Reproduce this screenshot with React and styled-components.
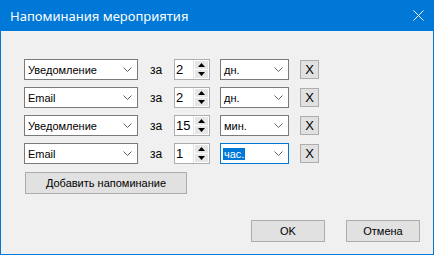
import React from 'react';
import styled, { createGlobalStyle } from 'styled-components';

const GlobalStyle = createGlobalStyle`
  html, body {
    margin: 0;
    padding: 0;
    background: #f0f0f0;
    overflow: hidden;
  }
  * { box-sizing: border-box; }
`

const Window = styled.div`
  width: 434px;
  height: 255px;
  border: 1px solid #0078d7;
  border-top: none;
  background: #f0f0f0;
  display: flex;
  flex-direction: column;
  font-family: "Liberation Sans", Arial, sans-serif;
  font-size: 11px;
  color: #000;
`

const TitleBar = styled.div`
  height: 31px;
  margin: 0 -1px;
  background: #0078d7;
  display: flex;
  align-items: center;
  justify-content: space-between;
  padding: 0 10px 0 10px;
  color: #fff;
  font-family: "Noto Sans", "Open Sans", sans-serif;
  font-size: 13px;
`

const CloseBtn = styled.div`
  width: 12px;
  height: 12px;
  display: flex;
  align-items: center;
  justify-content: center;
`

const Body = styled.div`
  flex: 1;
  display: flex;
  flex-direction: column;
  padding: 28px 13px 12px 23px;
`

const Rows = styled.div`
  display: flex;
  flex-direction: column;
  gap: 7px;
`

const Row = styled.div`
  display: flex;
  align-items: center;
  height: 21px;
`

const Select = styled.div`
  width: ${p => p.$w}px;
  height: 21px;
  margin-left: ${p => p.$ml || 0}px;
  background: #fff;
  border: 1px solid ${p => (p.$focus ? '#0078d7' : '#7a7a7a')};
  display: flex;
  align-items: center;
  justify-content: space-between;
  padding: 0 5px 0 2px;
`

const SelectText = styled.span`
  padding: 0 1px;
  line-height: 12px;
  background: ${p => (p.$hl ? '#0078d7' : 'transparent')};
  color: ${p => (p.$hl ? '#fff' : '#000')};
`

const Label = styled.span`
  margin-left: 12px;
  width: 24px;
  font-size: 12px;
`

const Spinner = styled.div`
  width: 36px;
  height: 21px;
  background: #fff;
  border: 1px solid #abadb3;
  display: flex;
  align-items: stretch;
`

const SpinValue = styled.div`
  flex: 1;
  display: flex;
  align-items: center;
  padding-left: 1px;
  font-size: 13px;
`

const SpinButtons = styled.div`
  width: 16px;
  display: flex;
  flex-direction: column;
  border-left: 1px solid #e3e3e3;
  padding: 1px;
  gap: 1px;
`

const SpinPart = styled.div`
  flex: 1;
  background: #e6e6e6;
  display: flex;
  align-items: center;
  justify-content: center;
`

const XButton = styled.div`
  width: 19px;
  height: 19px;
  margin-left: 11px;
  background: #e1e1e1;
  border: 1px solid #adadad;
  display: flex;
  align-items: center;
  justify-content: center;
  font-size: 13px;
`

const Button = styled.div`
  width: ${p => p.$w}px;
  height: 22px;
  background: #e1e1e1;
  border: 1px solid #adadad;
  display: flex;
  align-items: center;
  justify-content: center;
`

const AddButton = styled(Button)`
  margin: 8px 0 0 1px;
`

const Footer = styled.div`
  margin-top: auto;
  display: flex;
  justify-content: flex-end;
  gap: 21px;
`

const Chevron = () => (
  <svg width="9" height="5" viewBox="0 0 9 5">
    <path d="M0.5 0.5 L4.5 4.5 L8.5 0.5" fill="none" stroke="#606060" strokeWidth="1" />
  </svg>
)

const Arrow = ({ up }) => (
  <svg width="7" height="4" viewBox="0 0 7 4">
    <path d={up ? 'M0 4 L3.5 0 L7 4 Z' : 'M0 0 L3.5 4 L7 0 Z'} fill="#000" />
  </svg>
)

const reminders = [
  { type: 'Уведомление', value: 2, unit: 'дн.' },
  { type: 'Email', value: 2, unit: 'дн.' },
  { type: 'Уведомление', value: 15, unit: 'мин.' },
  { type: 'Email', value: 1, unit: 'час.', focus: true },
]

const App = () => {
  return (
    <>
      <GlobalStyle />
      <Window>
        <TitleBar>
          <span>Напоминания мероприятия</span>
          <CloseBtn>
            <svg width="11" height="11" viewBox="0 0 11 11">
              <path d="M0.5 0.5 L10.5 10.5 M10.5 0.5 L0.5 10.5" stroke="#fff" strokeWidth="1" />
            </svg>
          </CloseBtn>
        </TitleBar>
        <Body>
          <Rows>
            {reminders.map((r, i) => (
              <Row key={i}>
                <Select $w={114}>
                  <SelectText>{r.type}</SelectText>
                  <Chevron />
                </Select>
                <Label>за</Label>
                <Spinner>
                  <SpinValue>{r.value}</SpinValue>
                  <SpinButtons>
                    <SpinPart><Arrow up /></SpinPart>
                    <SpinPart><Arrow /></SpinPart>
                  </SpinButtons>
                </Spinner>
                <Select $w={69} $ml={10} $focus={r.focus}>
                  <SelectText $hl={r.focus}>{r.unit}</SelectText>
                  <Chevron />
                </Select>
                <XButton>X</XButton>
              </Row>
            ))}
          </Rows>
          <AddButton $w={162}>Добавить напоминание</AddButton>
          <Footer>
            <Button $w={74}>OK</Button>
            <Button $w={74}>Отмена</Button>
          </Footer>
        </Body>
      </Window>
    </>
  )
}

export default App;
